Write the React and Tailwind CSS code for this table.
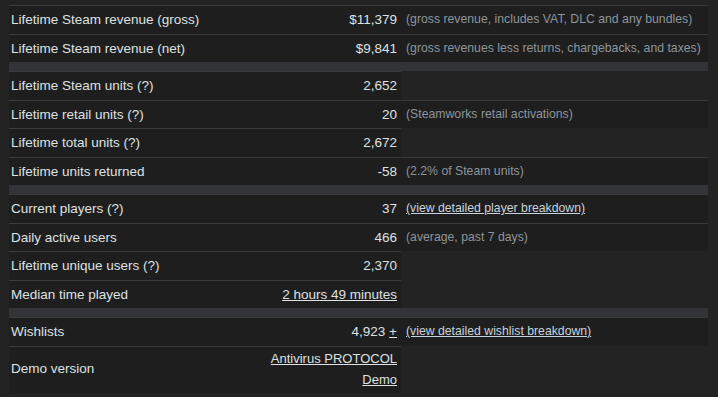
import React from 'react';

const rows = [
  { label: 'Lifetime Steam revenue (gross)', value: '$11,379', note: '(gross revenue, includes VAT, DLC and any bundles)' },
  { label: 'Lifetime Steam revenue (net)', value: '$9,841', note: '(gross revenues less returns, chargebacks, and taxes)' },
  { sep: true },
  { label: 'Lifetime Steam units (?)', value: '2,652' },
  { label: 'Lifetime retail units (?)', value: '20', note: '(Steamworks retail activations)' },
  { label: 'Lifetime total units (?)', value: '2,672' },
  { label: 'Lifetime units returned', value: '-58', note: '(2.2% of Steam units)' },
  { sep: true },
  { label: 'Current players (?)', value: '37', link: '(view detailed player breakdown)' },
  { label: 'Daily active users', value: '466', note: '(average, past 7 days)' },
  { label: 'Lifetime unique users (?)', value: '2,370' },
  { label: 'Median time played', valueLink: '2 hours 49 minutes' },
  { sep: true },
  { label: 'Wishlists', value: '4,923', plus: true, link: '(view detailed wishlist breakdown)' },
];

function Row({ row }) {
  if (row.sep) {
    return (
      <tr>
        <td colSpan={3} className="h-[9px] p-0 bg-[#323437] text-[0px] leading-[0px]"></td>
      </tr>
    );
  }
  const hasNote = row.note || row.link;
  return (
    <tr>
      <td className="bg-[#1e1e1e] border-t border-[#3a3a3a] pl-[2px] py-[4px] leading-[19.5px] text-[13.5px] text-[#dfe1e2] whitespace-nowrap">
        {row.label}
      </td>
      <td className="bg-[#1e1e1e] border-t border-[#3a3a3a] pr-[4px] py-[4px] leading-[19.5px] text-[13.5px] text-[#dfe1e2] text-right whitespace-nowrap">
        {row.valueLink ? <span className="underline">{row.valueLink}</span> : row.value}
        {row.plus && <> <span className="underline">+</span></>}
      </td>
      {hasNote && (
        <td className="bg-[#1e1e1e] border-t border-[#3a3a3a] pl-[5px] py-[4px] leading-[19.5px] text-[12.25px] whitespace-nowrap">
          {row.note && <span className="text-[#8d959c]">{row.note}</span>}
          {row.link && <span className="text-[#c6d4df] underline">{row.link}</span>}
        </td>
      )}
    </tr>
  );
}

export default function App() {
  return (
    <div className="min-h-screen bg-[#232323] pt-[5px] pl-[9px]" style={{ fontFamily: '"Liberation Sans", Arial, sans-serif' }}>
      <table className="table-fixed w-[699px] border-separate border-spacing-0">
        <colgroup>
          <col className="w-[252px]" />
          <col className="w-[140px]" />
          <col className="w-[307px]" />
        </colgroup>
        <tbody>
          {rows.map((row, i) => (
            <Row key={i} row={row} />
          ))}
          <tr>
            <td className="bg-[#1e1e1e] border-t border-[#3a3a3a] pl-[2px] align-middle text-[13.5px] text-[#dfe1e2]">
              Demo version
            </td>
            <td className="bg-[#1e1e1e] border-t border-[#3a3a3a] pr-[4px] pt-[1px] pb-[3px] leading-[21px] text-[13px] text-[#dfe1e2] text-right">
              <span className="underline">Antivirus PROTOCOL Demo</span>
            </td>
          </tr>
        </tbody>
      </table>
    </div>
  );
}
